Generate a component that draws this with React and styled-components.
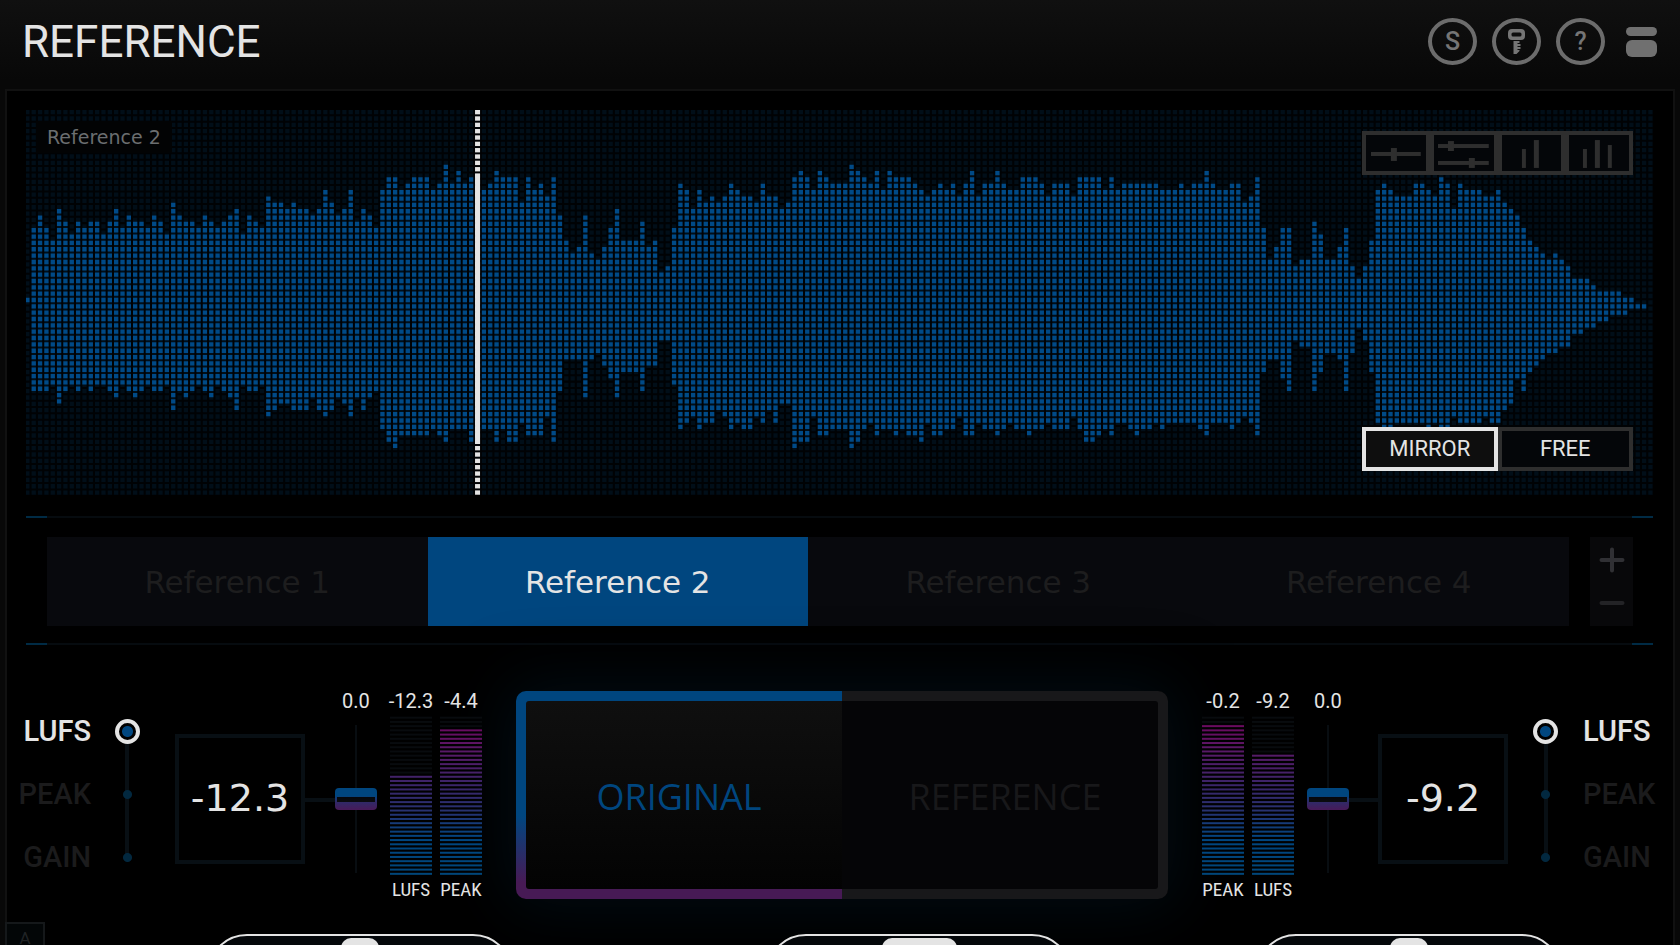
import React, { useState } from "react";
import styled, { createGlobalStyle, css } from "styled-components";

const blue = "#00467f";
const white = "#e4e4e4";
const sans = `Roboto, "Liberation Sans", sans-serif`;
const wide = `"DejaVu Sans", "Liberation Sans", sans-serif`;
const narrow = `"Liberation Sans Narrow", "Roboto Condensed", "Liberation Sans", sans-serif`;

const GlobalStyle = createGlobalStyle`
  *, *::before, *::after { box-sizing: border-box; }
  body {
    margin: 0;
    height: 100vh;
    overflow: hidden;
    background: #080808;
    color: ${white};
    font-family: ${sans};
  }
  button, input { margin: 0; font: inherit; color: inherit; }
  button { padding: 0; border: 0; cursor: pointer; }
`;

const Page = styled.div`
  display: flex;
  flex-direction: column;
`;

const Header = styled.header`
  display: flex;
  align-items: center;
  justify-content: space-between;
  height: 89px;
  padding: 0 23px 6px 22px;
  background: linear-gradient(#101010, #080808 90%);
`;

const Title = styled.h1`
  margin: 0;
  font-size: 44px;
  font-weight: 400;
  line-height: 48px;
`;

const HeaderActions = styled.nav`
  display: flex;
  align-items: center;
  gap: 15px;
`;

const RoundButton = styled.button`
  display: grid;
  place-items: center;
  width: 49px;
  height: 47px;
  border: 4px solid #6c6c6c;
  border-radius: 50%;
  background: transparent;
  color: #757575;
  font-size: 25px;
  font-weight: 500;
  line-height: 28px;
`;

const MenuButton = styled.button`
  display: grid;
  grid-template-rows: 9px 17px;
  gap: 4px;
  width: 31px;
  margin-left: 6px;
  background: transparent;

  &::before, &::after {
    content: "";
    border-radius: 6px;
    background: #707070;
  }
`;

const Panel = styled.main`
  margin: 0 5px;
  padding-top: 19px;
  border: 2px solid #111;
  border-bottom: 0;
  background: #000;
`;

const WaveArea = styled.section`
  position: relative;
  margin: 0 20px 0 19px;

  > svg { display: block; width: 100%; height: auto; }
`;

const WaveLabel = styled.div`
  position: absolute;
  top: 11px;
  left: 10px;
  padding: 4px 11px;
  background: #020304;
  color: #6b6e70;
  font-family: ${wide};
  font-size: 19px;
  line-height: 24px;
`;

const ButtonGroup = styled.div`
  position: absolute;
  right: 20px;
  display: flex;
  width: 271px;
  ${(p) => (p.$place === "top" ? "top: 21px;" : "bottom: 24px;")}
`;

const BoxButton = styled.button`
  flex: 1;
  height: 44px;
  border: 4px solid ${(p) => (p.$active ? white : "#2e2e2e")};
  background: ${(p) => (p.$active ? "#0e0e0e" : "#040609")};
  color: ${white};
  font-size: 22px;
  line-height: 32px;

  > svg { display: block; width: 100%; }
`;

const Divider = styled.div`
  height: 2px;
  margin: 0 20px 0 19px;
  background: linear-gradient(
    to right,
    #002b45 21px,
    #060b0f 21px,
    #060b0f calc(100% - 21px),
    #002b45 calc(100% - 21px)
  );
`;

const TopDivider = styled(Divider)`
  margin-top: 21px;
`;

const TabBar = styled.section`
  display: flex;
  gap: 21px;
  padding: 19px 40px 17px;
`;

const Tabs = styled.div`
  display: flex;
  flex: 1;
`;

const Tab = styled.button`
  flex: 1;
  height: 89px;
  background: ${(p) => (p.$active ? blue : "#08090d")};
  color: ${(p) => (p.$active ? white : "#1d1d1e")};
  font-family: ${wide};
  font-size: 31px;
  line-height: 36px;
`;

const Stepper = styled.div`
  display: flex;
  flex-direction: column;
  width: 43px;
`;

const StepButton = styled.button`
  display: grid;
  flex: 1;
  place-items: center;
  padding: ${(p) => (p.$dim ? "0 0 2px" : "2px 0 0")};
  background: #08080a;
  color: ${(p) => (p.$dim ? "#232326" : "#303034")};
`;

const Controls = styled.section`
  display: flex;
  align-items: flex-start;
  padding: 46px 20px 34px 14px;
`;

const Side = styled.div`
  display: flex;
  position: relative;
  z-index: 1;
  flex: none;
  align-items: flex-start;
  flex-direction: ${(p) => (p.$mirrored ? "row-reverse" : "row")};
`;

const Modes = styled.fieldset`
  position: relative;
  display: flex;
  flex-direction: column;
  gap: 35px;
  min-width: 0;
  margin: 0;
  padding: 26px 0 0;
  border: 0;
  ${(p) => (p.$mirrored ? "margin-left: 25px;" : "margin-right: 35px;")}

  &::before {
    content: "";
    position: absolute;
    top: 40px;
    bottom: 14px;
    width: 4px;
    background: #080f14;
    ${(p) => (p.$mirrored ? "left: 11px;" : "right: 11px;")}
  }
`;

const ModeRow = styled.label`
  position: relative;
  display: flex;
  align-items: center;
  gap: ${(p) => (p.$mirrored ? 25 : 24)}px;
  height: 28px;
  flex-direction: ${(p) => (p.$mirrored ? "row-reverse" : "row")};
  color: ${(p) => (p.$active ? white : "#1b1b1c")};
  font-size: 29px;
  font-weight: 500;
  line-height: 28px;
  cursor: pointer;
`;

const ModeText = styled.span`
  display: flex;
  width: 70px;
  justify-content: ${(p) => (p.$mirrored ? "flex-start" : "flex-end")};
`;

const ModeRadio = styled.input`
  appearance: none;
  width: 25px;
  height: 25px;
  border-radius: 50%;
  background: radial-gradient(circle, #02283f 4px, transparent 5px);

  &:checked {
    border: 4px solid ${white};
    background: radial-gradient(circle, ${blue} 5px, #000 6px);
  }
`;

const Readout = styled.output`
  display: grid;
  place-items: center;
  width: 130px;
  height: 130px;
  margin-top: 43px;
  padding-bottom: 2px;
  border: 4px solid #080f14;
  font-family: ${wide};
  font-size: 38px;
  line-height: 44px;
`;

const Connector = styled.div`
  width: ${(p) => (p.$mirrored ? 29 : 30)}px;
  height: 4px;
  margin-top: 107px;
  background: #080f14;
`;

const Column = styled.div`
  display: flex;
  flex-direction: column;
  align-items: center;
  width: 42px;
  gap: ${(p) => p.$gap}px;
`;

const Value = styled.span`
  font-size: 20px;
  line-height: 20px;
  white-space: nowrap;
`;

const MeterName = styled.span`
  font-family: ${narrow};
  font-size: 19px;
  line-height: 20px;
`;

const Meters = styled.div`
  display: flex;
  gap: 8px;
  ${(p) => (p.$mirrored ? "margin-right: 13px;" : "margin-left: 13px;")}
`;

const thumb = css`
  appearance: none;
  width: 42px;
  height: 22px;
  border: 0;
  border-radius: 4px;
  background:
    linear-gradient(#05080c, #0b0b0e) center / 38px 5px no-repeat,
    linear-gradient(${blue} 35%, #2f2a68 62%, #481a58);
`;

const Fader = styled.input`
  appearance: none;
  writing-mode: vertical-lr;
  direction: rtl;
  width: 42px;
  height: 148px;
  background: linear-gradient(#080d11, #080d11) center / 2px 100% no-repeat;

  &::-webkit-slider-thumb { ${thumb} }
  &::-moz-range-thumb { ${thumb} }
`;

const Source = styled.div`
  display: flex;
  flex: 1;
  height: 208px;
  margin: 0 34px;
  border-radius: 10px;
  box-shadow: 0 0 64px 8px #020c13;
`;

const SourceButton = styled.button`
  flex: 1;
  padding: 10px;
  background: ${(p) =>
    p.$active ? `linear-gradient(${blue} 60%, #471a55 92%)` : "#18181a"};
  color: ${(p) => (p.$active ? blue : "#18181a")};
  font-family: "Open Sans", "Noto Sans", sans-serif;
  font-size: 36px;
  line-height: 48px;

  &:first-child { padding-right: 0; border-radius: 10px 0 0 10px; }
  &:last-child { padding-left: 0; border-radius: 0 10px 10px 0; }
`;

const SourceFace = styled.span`
  display: grid;
  place-items: center;
  height: 100%;
  padding: ${(p) => (p.$active ? "4px 10px 0 0" : "4px 0 0 10px")};
  border-radius: ${(p) => (p.$active ? "3px 0 0 3px" : "0 3px 3px 0")};
  background: ${(p) =>
    p.$active ? "linear-gradient(#0f0f0f, #030303)" : "#050507"};
`;

const Footer = styled.footer`
  position: relative;
  display: grid;
  grid-template-columns: 706px 1fr 528px;
  justify-items: center;
`;

const Slider = styled.input`
  appearance: none;
  width: 306px;
  height: 80px;
  padding: 2px;
  border: 2px solid ${white};
  border-radius: 40px;
  background: #04070a;

  &::-webkit-slider-thumb {
    appearance: none;
    width: ${(p) => p.$thumb}px;
    height: 72px;
    border-radius: 10px;
    background: ${white};
  }
`;

const Crossfader = styled(Slider)`
  margin-right: 20px;
`;

const CornerButton = styled.button`
  position: absolute;
  top: -12px;
  left: -2px;
  width: 40px;
  height: 32px;
  border: 2px solid #15181a;
  background: #030607;
  color: #202325;
  font-size: 17px;
  line-height: 14px;
`;

/* Filled cells above and below the centre line, one pair for each column. */
const ABOVE = [
  0, 11, 13, 11, 9, 14, 12, 10, 12, 11, 12, 12, 10, 12, 14, 11, 13, 12, 12, 11,
  13, 12, 10, 15, 13, 12, 12, 11, 13, 12, 11, 12, 13, 14, 10, 13, 12, 11, 16, 15,
  15, 14, 15, 14, 14, 13, 14, 17, 15, 13, 14, 17, 12, 14, 13, 11, 17, 19, 19, 17,
  18, 19, 19, 19, 17, 18, 21, 18, 20, 18, 19, 18, 17, 18, 20, 19, 19, 19, 15, 19,
  17, 18, 16, 19, 13, 9, 7, 8, 13, 7, 6, 8, 11, 14, 9, 9, 9, 12, 8, 9,
  4, 5, 11, 18, 17, 14, 17, 15, 16, 15, 16, 18, 17, 16, 16, 15, 18, 16, 16, 14,
  15, 19, 20, 19, 17, 20, 19, 18, 18, 18, 21, 20, 19, 18, 20, 17, 20, 19, 19, 19,
  18, 17, 16, 17, 18, 17, 18, 16, 18, 20, 16, 18, 18, 20, 18, 17, 17, 19, 19, 19,
  18, 16, 18, 18, 18, 16, 19, 19, 19, 19, 17, 19, 17, 18, 18, 18, 18, 18, 18, 17,
  17, 17, 18, 17, 18, 18, 20, 18, 17, 17, 18, 18, 15, 16, 19, 11, 6, 8, 11, 11,
  5, 6, 6, 12, 10, 6, 6, 8, 11, 5, 3, 5, 9, 17, 18, 17, 16, 16, 16, 18,
  18, 17, 16, 19, 18, 14, 18, 17, 17, 17, 16, 16, 17, 15, 14, 13, 11, 9, 8, 7,
  6, 7, 6, 5, 3, 3, 3, 2, 1, 1, 1, 1, 0, 0, -1, -1,
];
const BELOW = [
  0, 14, 14, 14, 13, 16, 14, 13, 14, 13, 14, 13, 13, 14, 15, 13, 14, 15, 14, 13,
  14, 14, 13, 17, 14, 15, 14, 13, 14, 15, 13, 14, 15, 17, 13, 14, 14, 13, 18, 17,
  16, 16, 17, 17, 17, 15, 17, 18, 17, 15, 16, 18, 15, 17, 15, 14, 20, 22, 23, 21,
  21, 21, 21, 21, 20, 21, 22, 20, 20, 20, 22, 20, 20, 20, 22, 20, 22, 22, 19, 21,
  21, 21, 18, 22, 14, 9, 9, 9, 15, 9, 8, 10, 12, 15, 11, 11, 11, 14, 10, 10,
  6, 6, 13, 20, 19, 18, 20, 19, 19, 17, 18, 20, 19, 20, 20, 18, 19, 17, 19, 16,
  16, 23, 22, 22, 18, 21, 21, 20, 20, 20, 23, 22, 20, 19, 21, 20, 20, 21, 20, 21,
  21, 22, 19, 21, 21, 20, 20, 18, 21, 21, 19, 20, 20, 21, 20, 19, 20, 20, 21, 20,
  20, 19, 20, 20, 20, 18, 20, 22, 22, 21, 20, 21, 19, 19, 20, 21, 20, 20, 19, 20,
  19, 19, 19, 19, 19, 20, 21, 19, 19, 19, 20, 19, 18, 19, 21, 11, 9, 9, 12, 14,
  6, 7, 7, 14, 11, 8, 8, 9, 14, 8, 4, 6, 11, 19, 20, 20, 19, 19, 19, 19,
  19, 20, 19, 20, 20, 18, 19, 19, 19, 19, 18, 19, 19, 17, 16, 12, 14, 11, 10, 9,
  8, 8, 7, 7, 5, 5, 4, 4, 3, 3, 2, 2, 2, 1, 1, 1,
];

const PITCH = 19.02;
const CELL = 13;
const cellAt = (x, y) =>
  `M${x.toFixed(1)} ${y.toFixed(1)}h${CELL}v${CELL}h-${CELL}z`;

const wavePath = ABOVE.map((up, c) => {
  let d = "";
  for (let k = -up; k <= BELOW[c]; k++) {
    d += cellAt(c * PITCH - 2.3, 563.5 + k * PITCH);
  }
  return d;
}).join("");

const gridPath = Array.from({ length: 257 }, (_, c) =>
  Array.from({ length: 61 }, (_, r) =>
    cellAt(c * PITCH - 2.3, r * PITCH)
  ).join("")
).join("");

function Waveform() {
  const x = 71 * PITCH - 3.3;
  return (
    <svg viewBox="0 0 4881 1155" role="img" aria-label="Waveform of Reference 2">
      <rect width="4881" height="1155" fill="#000204" />
      <path d={gridPath} fill="#010e18" />
      <path d={wavePath} fill="#004a87" />
      <rect x={x - 4} width="23" height="1155" fill="#000204" />
      {Array.from({ length: 61 }, (_, r) => (
        <rect key={r} x={x} y={r * PITCH} width="15" height="13" fill={white} />
      ))}
      <rect x={x} y="192" width="15" height="810" fill={white} />
    </svg>
  );
}

const VIEW_ICONS = {
  "Single band": [[5, 17, 50, 4], [25, 13, 6, 13]],
  "Dual band": [[4, 9, 51, 4], [14, 6, 6, 10], [4, 26, 51, 4], [35, 23, 6, 10]],
  "Two bars": [[20, 14, 4, 19], [32, 5, 5, 28]],
  "Three bars": [[14, 14, 4, 19], [26, 5, 5, 28], [39, 10, 4, 23]],
};

function ViewIcon({ shapes }) {
  return (
    <svg height="36" viewBox="0 0 60 36" fill="#2e2e2e">
      {shapes.map(([x, y, w, h]) => (
        <rect key={`${x}-${y}`} x={x} y={y} width={w} height={h} />
      ))}
    </svg>
  );
}

function KeyIcon() {
  return (
    <svg width="19" height="26" viewBox="0 0 19 26" fill="#757575">
      <path
        fillRule="evenodd"
        d="M5 0h9q4 0 4 4v3q0 4-4 4H5q-4 0-4-4V4q0-4 4-4zM6 3.500q-1.500 0-1.500 1.500v1Q4.500 7.500 6 7.500h7q1.500 0 1.500-1.500V5Q14.500 3.500 13 3.500z"
      />
      <path d="M6.500 12h6v2h-2v1h3v2h-3v1h3v2h-3v1h2v1l-3 3h-3z" />
    </svg>
  );
}

const SEGMENTS = 38;
const STOPS = [
  [0, [112, 6, 94]],
  [0.25, [84, 28, 104]],
  [0.42, [60, 36, 104]],
  [0.6, [38, 50, 112]],
  [0.78, [0, 70, 128]],
  [1, [0, 70, 122]],
];

function segmentColor(t) {
  const i = Math.max(1, STOPS.findIndex(([s]) => s >= t));
  const [a, from] = STOPS[i - 1];
  const [b, to] = STOPS[i];
  const f = (t - a) / (b - a);
  return `rgb(${from.map((v, n) => Math.round(v + (to[n] - v) * f)).join(",")})`;
}

function Meter({ name, value, lit }) {
  return (
    <Column $gap={5}>
      <Value>{value}</Value>
      <svg width="42" height="159" viewBox="0 0 42 159" role="img" aria-label={`${name} ${value}`}>
        {Array.from({ length: SEGMENTS }, (_, i) => (
          <rect
            key={i}
            y={i * 4.22 + 0.7}
            width="42"
            height="2"
            fill={i < SEGMENTS - lit ? "#080b0e" : segmentColor(i / (SEGMENTS - 1))}
          />
        ))}
      </svg>
      <MeterName>{name}</MeterName>
    </Column>
  );
}

function LevelSide({ id, mirrored, readout, meters }) {
  const [mode, setMode] = useState("LUFS");
  return (
    <Side $mirrored={mirrored}>
      <Modes $mirrored={mirrored} aria-label={`${id} level mode`}>
        {["LUFS", "PEAK", "GAIN"].map((m) => (
          <ModeRow key={m} $active={m === mode} $mirrored={mirrored}>
            <ModeText $mirrored={mirrored}>{m}</ModeText>
            <ModeRadio
              type="radio"
              name={`${id}-mode`}
              checked={m === mode}
              onChange={() => setMode(m)}
            />
          </ModeRow>
        ))}
      </Modes>
      <Readout>{readout}</Readout>
      <Connector $mirrored={mirrored} />
      <Column $gap={14}>
        <Value>0.0</Value>
        <Fader type="range" min="-12" max="12" defaultValue="0" aria-label={`${id} gain`} />
      </Column>
      <Meters $mirrored={mirrored}>
        {meters.map((m) => (
          <Meter key={m.name} {...m} />
        ))}
      </Meters>
    </Side>
  );
}

function TabsSection({ tab, setTab }) {
  return (
    <>
      <TopDivider />
      <TabBar>
        <Tabs>
          {[1, 2, 3, 4].map((n) => (
            <Tab key={n} $active={n === tab} onClick={() => setTab(n)}>
              Reference {n}
            </Tab>
          ))}
        </Tabs>
        <Stepper>
          <StepButton aria-label="Add reference">
            <svg width="26" height="26" viewBox="0 0 26 26" stroke="currentColor" strokeWidth="4" strokeLinecap="round">
              <path d="M2.500 13h21M13 2.500v21" />
            </svg>
          </StepButton>
          <StepButton $dim aria-label="Remove reference">
            <svg width="26" height="26" viewBox="0 0 26 26" stroke="currentColor" strokeWidth="4" strokeLinecap="round">
              <path d="M2.500 13h21" />
            </svg>
          </StepButton>
        </Stepper>
      </TabBar>
      <Divider />
    </>
  );
}

export default function App() {
  const [tab, setTab] = useState(2);
  const [sync, setSync] = useState("MIRROR");
  return (
    <Page>
      <GlobalStyle />
      <Header>
        <Title>REFERENCE</Title>
        <HeaderActions>
          <RoundButton aria-label="Solo">S</RoundButton>
          <RoundButton aria-label="License"><KeyIcon /></RoundButton>
          <RoundButton aria-label="Help">?</RoundButton>
          <MenuButton aria-label="Menu" />
        </HeaderActions>
      </Header>
      <Panel>
        <WaveArea>
          <Waveform />
          <WaveLabel>Reference 2</WaveLabel>
          <ButtonGroup $place="top">
            {Object.entries(VIEW_ICONS).map(([name, shapes]) => (
              <BoxButton key={name} aria-label={name}>
                <ViewIcon shapes={shapes} />
              </BoxButton>
            ))}
          </ButtonGroup>
          <ButtonGroup $place="bottom">
            {["MIRROR", "FREE"].map((s) => (
              <BoxButton key={s} $active={s === sync} onClick={() => setSync(s)}>
                {s}
              </BoxButton>
            ))}
          </ButtonGroup>
        </WaveArea>
        <TabsSection tab={tab} setTab={setTab} />
        <Controls>
          <LevelSide
            id="original"
            readout="-12.3"
            meters={[
              { name: "LUFS", value: "-12.3", lit: 24 },
              { name: "PEAK", value: "-4.4", lit: 35 },
            ]}
          />
          <Source>
            <SourceButton $active>
              <SourceFace $active>ORIGINAL</SourceFace>
            </SourceButton>
            <SourceButton>
              <SourceFace>REFERENCE</SourceFace>
            </SourceButton>
          </Source>
          <LevelSide
            id="reference"
            mirrored
            readout="-9.2"
            meters={[
              { name: "PEAK", value: "-0.2", lit: 36 },
              { name: "LUFS", value: "-9.2", lit: 29 },
            ]}
          />
        </Controls>
        <Footer>
          <CornerButton>A</CornerButton>
          <Slider type="range" $thumb={38} aria-label="Original balance" />
          <Crossfader type="range" $thumb={75} aria-label="Crossfade" />
          <Slider type="range" $thumb={38} aria-label="Reference balance" />
        </Footer>
      </Panel>
    </Page>
  );
}
